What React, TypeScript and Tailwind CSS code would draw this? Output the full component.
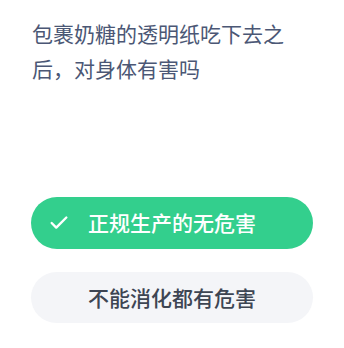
import { Check } from 'lucide-react';

export default function App() {
  return (
    <div
      className="w-[344px] h-[348px] bg-white overflow-hidden"
      style={{ fontFamily: '"Noto Sans CJK SC", "Noto Sans", sans-serif' }}
    >
      <div className="pt-[16px] pl-[32px] w-[300px]">
        <h1 className="text-[21px] leading-[35px] font-normal text-[#4b5775]">
          包裹奶糖的透明纸吃下去之后，对身体有害吗
        </h1>
      </div>

      <div className="mt-[111px] px-[31px] flex flex-col gap-[23px]">
        <button className="relative h-[52px] w-full rounded-full bg-[#33cf8d] flex items-center justify-center">
          <Check className="absolute left-[17px] w-[22px] h-[22px] text-white" strokeWidth={2.6} />
          <span className="text-[21px] font-medium text-white">正规生产的无危害</span>
        </button>
        <button className="h-[51px] w-full rounded-full bg-[#f4f5f8] flex items-center justify-center">
          <span className="text-[21px] font-medium text-[#3d4553]">不能消化都有危害</span>
        </button>
      </div>
    </div>
  );
}
